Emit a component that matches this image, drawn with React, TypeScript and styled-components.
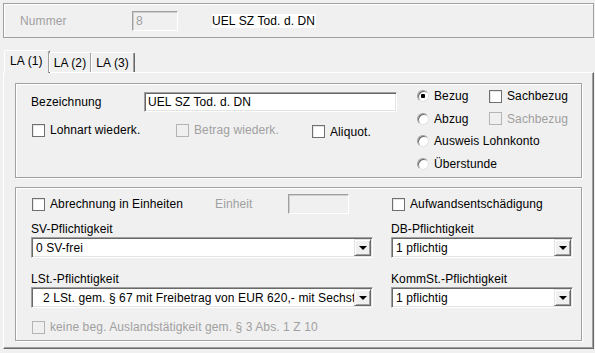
import React from 'react';
import styled, { createGlobalStyle, css } from 'styled-components';

const GlobalStyle = createGlobalStyle`
  body {
    margin: 0;
    background: #f0f0f0;
    font-family: "Liberation Sans", Arial, sans-serif;
    font-size: 12px;
    letter-spacing: 0.1px;
    color: #000;
  }
`;

const Page = styled.div`
  width: 591px;
  padding: 3px 0 0 3px;
`;

const TopFrame = styled.div`
  box-sizing: border-box;
  height: 35px;
  border: 1px solid #a0a0a0;
  box-shadow: inset 1px 1px 0 #fff;
  display: flex;
  align-items: center;
  padding-left: 16px;
`;

const Caption = styled.span<{ $width?: number; $disabled?: boolean }>`
  width: ${p => (p.$width ? `${p.$width}px` : 'auto')};
  flex-shrink: 0;
  color: ${p => (p.$disabled ? '#a0a0a0' : '#000')};
  white-space: nowrap;
`;

const TextBox = styled.div<{ $width: number; $height?: number; $disabled?: boolean }>`
  box-sizing: border-box;
  width: ${p => p.$width}px;
  height: ${p => p.$height ?? 20}px;
  flex-shrink: 0;
  padding: 0 3px;
  line-height: ${p => (p.$height ?? 20) - 2}px;
  border: 1px solid;
  white-space: nowrap;
  overflow: hidden;
  ${p =>
    p.$disabled
      ? css`
          background: #f0f0f0;
          border-color: #a0a0a0 #fff #fff #a0a0a0;
          box-shadow: inset 1px 1px 0 #cfcfcf;
          color: #a0a0a0;
        `
      : css`
          background: #fff;
          border-color: #a0a0a0 #fff #fff #a0a0a0;
          box-shadow: inset 1px 1px 0 #696969, inset -1px -1px 0 #e3e3e3;
        `}
`;

const Highlight = styled.span`
  margin-left: 34px;
  background: #fff;
  line-height: 14px;
  padding-right: 1px;
`;

const TabStrip = styled.div`
  display: flex;
  align-items: flex-end;
  height: 22px;
  margin-top: 12px;
  padding-left: 1px;
  position: relative;
  z-index: 1;
`;

const Tab = styled.div<{ $active?: boolean }>`
  box-sizing: border-box;
  height: ${p => (p.$active ? 23 : 20)}px;
  margin-bottom: ${p => (p.$active ? -1 : 0)}px;
  padding: ${p => (p.$active ? '2px 6px 0 5px' : '2px 5px 0 4px')};
  margin-left: ${p => (p.$active ? 0 : -1)}px;
  background: #f0f0f0;
  border: 1px solid;
  border-bottom: none;
  border-color: #fff #696969 transparent #fff;
  box-shadow: inset -1px 0 0 #a0a0a0;
  border-radius: 2px 2px 0 0;
  line-height: 16px;
  white-space: nowrap;
`;

const TabPanel = styled.div`
  box-sizing: border-box;
  height: 277px;
  border: 1px solid;
  border-color: #fff #696969 #696969 #fff;
  box-shadow: inset -1px -1px 0 #a0a0a0;
  padding: 10px 11px 7px 11px;
  display: flex;
  flex-direction: column;
  gap: 9px;
`;

const GroupBox = styled.div<{ $height: number }>`
  box-sizing: border-box;
  height: ${p => p.$height}px;
  border: 1px solid #a0a0a0;
  box-shadow: inset 1px 1px 0 #fff, 1px 1px 0 #fff;
`;

const NameGroup = styled(GroupBox)`
  display: flex;
  padding-left: 15px;
`;

const NameColumn = styled.div`
  width: 366px;
  margin-right: 20px;
  padding-top: 8px;
`;

const Row = styled.div<{ $height?: number }>`
  display: flex;
  align-items: center;
  height: ${p => (p.$height ? `${p.$height}px` : 'auto')};
`;

const FlagRow = styled(Row)`
  margin-top: 9px;
`;

const KindGrid = styled.div`
  padding-top: 1px;
  display: grid;
  grid-template-columns: 71px auto;
  grid-auto-rows: 22.5px;
  align-items: center;
`;

const Cell = styled.div<{ $width: number }>`
  width: ${p => p.$width}px;
  flex-shrink: 0;
`;

const OptionLabel = styled.label<{ $disabled?: boolean }>`
  display: inline-flex;
  align-items: center;
  gap: 5px;
  white-space: nowrap;
  color: ${p => (p.$disabled ? '#a0a0a0' : '#000')};
`;

const Box = styled.span<{ $disabled?: boolean }>`
  box-sizing: border-box;
  width: 13px;
  height: 13px;
  flex-shrink: 0;
  margin-left: 1px;
  border: 1px solid;
  border-color: ${p => (p.$disabled ? '#b4b4b4' : '#707070')};
  background: ${p => (p.$disabled ? '#f0f0f0' : '#fff')};
  box-shadow: ${p => (p.$disabled ? 'none' : 'inset 1px 1px 0 #e6e6e6')};
`;

const Round = styled.span<{ $checked?: boolean }>`
  box-sizing: border-box;
  width: 12px;
  height: 12px;
  flex-shrink: 0;
  border-radius: 50%;
  border: 1px solid;
  border-color: #a0a0a0 #e3e3e3 #e3e3e3 #a0a0a0;
  background: ${p => (p.$checked ? 'radial-gradient(circle, #000 0 2px, #fff 2.5px)' : '#fff')};
  box-shadow: inset 1px 1px 0 #696969;
`;

const Check = ({ label, disabled }: { label: string; disabled?: boolean }) => (
  <OptionLabel $disabled={disabled}>
    <Box $disabled={disabled} />
    {label}
  </OptionLabel>
);

const Radio = ({ label, checked }: { label: string; checked?: boolean }) => (
  <OptionLabel>
    <Round $checked={checked} />
    {label}
  </OptionLabel>
);

const TaxGroup = styled(GroupBox)`
  padding: 6px 0 0 15px;
  display: grid;
  grid-template-columns: 342px 182px;
  column-gap: 18px;
  grid-template-rows: 20px 44px 50px 29px;
  align-items: end;
`;

const TopRow = styled(Row)`
  height: 20px;
`;

const Field = styled.div`
  display: flex;
  flex-direction: column;
`;

const FieldLabel = styled.div`
  line-height: 16px;
  height: 16px;
`;

const Combo = styled.div`
  box-sizing: border-box;
  height: 21px;
  display: flex;
  background: #fff;
  border: 1px solid;
  border-color: #a0a0a0 #fff #fff #a0a0a0;
  box-shadow: inset 1px 1px 0 #696969, inset -1px -1px 0 #e3e3e3;
  padding: 1px;
`;

const ComboText = styled.div<{ $indent?: number }>`
  flex: 1;
  overflow: hidden;
  white-space: nowrap;
  line-height: 18px;
  padding-left: ${p => p.$indent ?? 3}px;
`;

const ComboButton = styled.div`
  box-sizing: border-box;
  width: 17px;
  flex-shrink: 0;
  background: #f0f0f0;
  border: 1px solid;
  border-color: #e3e3e3 #696969 #696969 #e3e3e3;
  box-shadow: inset 1px 1px 0 #fff, inset -1px -1px 0 #a0a0a0;
  display: flex;
  align-items: center;
  justify-content: center;
  &::after {
    content: '';
    border-left: 4px solid transparent;
    border-right: 4px solid transparent;
    border-top: 4px solid #000;
    margin-top: 1px;
  }
`;

const Select = ({ value, indent }: { value: string; indent?: number }) => (
  <Combo>
    <ComboText $indent={indent}>{value}</ComboText>
    <ComboButton />
  </Combo>
);

const UnitLabel = styled(Caption)`
  margin-left: 32px;
  width: 73px;
`;

const FootRow = styled(Row)`
  height: 20px;
`;

export default function App() {
  return (
    <Page>
      <GlobalStyle />
      <TopFrame>
        <Caption $width={112} $disabled>Nummer</Caption>
        <TextBox $width={46} $disabled>8</TextBox>
        <Highlight>UEL SZ Tod. d. DN</Highlight>
      </TopFrame>

      <TabStrip>
        <Tab $active>LA (1)</Tab>
        <Tab>LA (2)</Tab>
        <Tab>LA (3)</Tab>
      </TabStrip>

      <TabPanel>
        <NameGroup $height={95}>
          <NameColumn>
            <Row>
              <Caption $width={113}>Bezeichnung</Caption>
              <TextBox $width={253}>UEL SZ Tod. d. DN</TextBox>
            </Row>
            <FlagRow $height={21}>
              <Cell $width={144}><Check label="Lohnart wiederk." /></Cell>
              <Cell $width={136}><Check label="Betrag wiederk." disabled /></Cell>
              <Check label="Aliquot." />
            </FlagRow>
          </NameColumn>
          <KindGrid>
            <Radio label="Bezug" checked />
            <Check label="Sachbezug" />
            <Radio label="Abzug" />
            <Check label="Sachbezug" disabled />
            <Radio label="Ausweis Lohnkonto" />
            <span />
            <Radio label="Überstunde" />
          </KindGrid>
        </NameGroup>

        <TaxGroup $height={154}>
          <TopRow>
            <Check label="Abrechnung in Einheiten" />
            <UnitLabel $disabled>Einheit</UnitLabel>
            <TextBox $width={61} $disabled />
          </TopRow>
          <TopRow>
            <Check label="Aufwandsentschädigung" />
          </TopRow>
          <Field>
            <FieldLabel>SV-Pflichtigkeit</FieldLabel>
            <Select value="0 SV-frei" />
          </Field>
          <Field>
            <FieldLabel>DB-Pflichtigkeit</FieldLabel>
            <Select value="1 pflichtig" />
          </Field>
          <Field>
            <FieldLabel>LSt.-Pflichtigkeit</FieldLabel>
            <Select value="2 LSt. gem. § 67 mit Freibetrag von EUR 620,- mit Sechstel" indent={10} />
          </Field>
          <Field>
            <FieldLabel>KommSt.-Pflichtigkeit</FieldLabel>
            <Select value="1 pflichtig" />
          </Field>
          <FootRow>
            <Check label="keine beg. Auslandstätigkeit gem. § 3 Abs. 1 Z 10" disabled />
          </FootRow>
        </TaxGroup>
      </TabPanel>
    </Page>
  );
}
